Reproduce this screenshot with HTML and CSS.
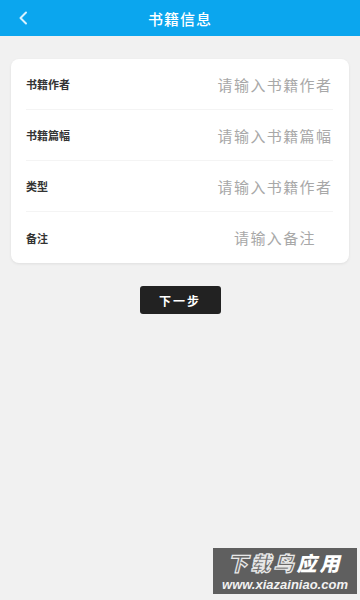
FILE: index.html
```html
<!DOCTYPE html>
<html lang="zh">
<head>
<meta charset="utf-8">
<meta name="viewport" content="width=360">
<link rel="stylesheet" href="styles.css">
</head>
<body>
<header class="topbar">
  <svg class="back" width="12" height="14" viewBox="0 0 12 14"><path d="M9 1.5 L3.5 7 L9 12.5" fill="none" stroke="#d8f2ff" stroke-width="2" stroke-linecap="round" stroke-linejoin="round"/></svg>
  <h1 class="title">书籍信息</h1>
</header>
<main class="content">
  <section class="card">
    <div class="row"><span class="label">书籍作者</span><input class="field" placeholder="请输入书籍作者"></div>
    <div class="row"><span class="label">书籍篇幅</span><input class="field" placeholder="请输入书籍篇幅"></div>
    <div class="row"><span class="label">类型</span><input class="field" placeholder="请输入书籍作者"></div>
    <div class="row"><span class="label">备注</span><input class="field" placeholder="请输入备注"></div>
  </section>
  <div class="actions"><button class="next">下一步</button></div>
</main>
<div class="watermark">
  <div class="wm-big"><span class="wm-out">下载鸟</span><span class="wm-in">应用</span></div>
  <div class="wm-url">www.xiazainiao.com</div>
</div>
</body>
</html>
```
FILE: styles.css
```css
* { box-sizing: border-box; }
html, body { margin: 0; padding: 0; }
body {
  width: 360px;
  height: 600px;
  background: #f1f1f1;
  font-family: "Noto Sans CJK SC", "Noto Sans", sans-serif;
  position: relative;
  overflow: hidden;
}
.topbar {
  height: 36px;
  background: #0ba6ee;
  display: flex;
  align-items: center;
  justify-content: center;
  position: relative;
}
.back {
  position: absolute;
  left: 17px;
  top: 11px;
}
.title {
  margin: 0;
  font-size: 15px;
  font-weight: 500;
  color: #ffffff;
  letter-spacing: 1px;
}
.content {
  padding: 23px 11px 0;
}
.card {
  background: #ffffff;
  border-radius: 8px;
  box-shadow: 0 1px 3px rgba(0,0,0,0.08);
  padding: 0 16px 0 15px;
}
.row {
  height: 51px;
  display: flex;
  align-items: center;
  justify-content: space-between;
  border-bottom: 1px solid #f4f4f4;
}
.row:last-child { border-bottom: none; }
.label {
  font-size: 11px;
  font-weight: 700;
  color: #333333;
}
.field {
  width: 122px;
  border: none;
  outline: none;
  background: transparent;
  text-align: center;
  font-family: inherit;
  font-size: 15px;
  letter-spacing: 1.4px;
  padding: 0;
  margin-right: -3px;
  color: #333;
}
.field::placeholder { color: #a8a8a8; }
.actions {
  display: flex;
  justify-content: center;
  padding-top: 23px;
}
.next {
  width: 81px;
  height: 28px;
  background: #222222;
  color: #ffffff;
  border: none;
  border-radius: 3px;
  font-family: inherit;
  font-size: 12px;
  font-weight: 700;
  letter-spacing: 2px;
  padding: 0;
}
.watermark {
  position: absolute;
  right: 3px;
  bottom: 6px;
  width: 144px;
  height: 46px;
  background: #5f5f5f;
  display: flex;
  flex-direction: column;
  align-items: center;
  justify-content: center;
}
.wm-big {
  font-size: 20px;
  line-height: 29px;
  font-weight: 900;
  font-style: italic;
  letter-spacing: 3px;
  margin-top: -2px;
}
.wm-out {
  color: #6a6a6a;
  -webkit-text-stroke: 1.2px #e8e8e8;
}
.wm-in { color: #ffffff; }
.wm-url {
  font-family: "Liberation Sans", sans-serif;
  font-size: 13px;
  line-height: 15px;
  font-weight: 700;
  font-style: italic;
  color: #f2f2f2;
}
```
